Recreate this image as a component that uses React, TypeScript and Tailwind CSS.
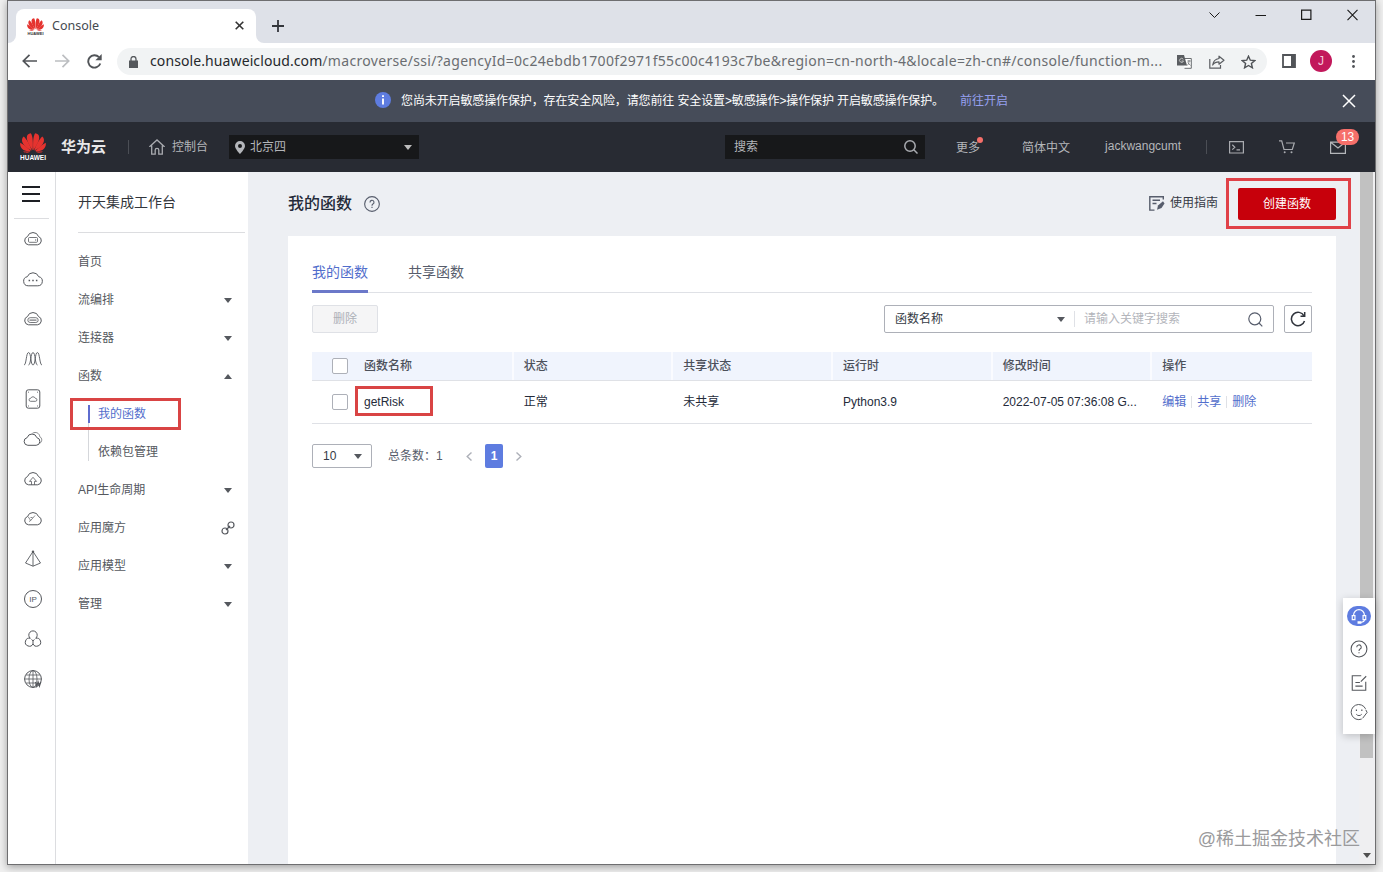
import { memo, ReactNode } from "react";

interface IconProps {
  children: ReactNode;
  size?: number;
  className?: string;
  strokeWidth?: number;
}

interface MenuItem {
  label: string;
  mark?: "down" | "up" | "link";
}

const URL_HOST = "console.huaweicloud.com";
const URL_PATH =
  "/macroverse/ssi/?agencyId=0c24ebdb1700f2971f55c00c4193c7be&region=cn-north-4&locale=zh-cn#/console/function-m...";

const COLUMNS = ["函数名称", "状态", "共享状态", "运行时", "修改时间", "操作"];
const ROW = ["getRisk", "正常", "未共享", "Python3.9", "2022-07-05 07:36:08 G..."];
const ACTIONS = ["编辑", "共享", "删除"];

const MENU_TOP: MenuItem[] = [
  { label: "首页" },
  { label: "流编排", mark: "down" },
  { label: "连接器", mark: "down" },
  { label: "函数", mark: "up" },
];

const MENU_BOTTOM: MenuItem[] = [
  { label: "API生命周期", mark: "down" },
  { label: "应用魔方", mark: "link" },
  { label: "应用模型", mark: "down" },
  { label: "管理", mark: "down" },
];

const CLOUD = "M5.500 15.800a4.300 4.300 0 0 1-1-8.300 5.800 5.800 0 0 1 11 0 4.300 4.300 0 0 1-1 8.300z";

// Base for the line icons, drawn on a 20x20 grid
function Icon({ children, size = 20, className = "", strokeWidth = 1 }: IconProps) {
  return (
    <svg
      width={size}
      height={size}
      viewBox="0 0 20 20"
      fill="none"
      stroke="currentColor"
      strokeWidth={strokeWidth}
      className={`shrink-0 ${className}`}
      aria-hidden="true"
    >
      {children}
    </svg>
  );
}

function Caret({ up = false, className = "" }: { up?: boolean; className?: string }) {
  return (
    <svg width="8" height="5" viewBox="0 0 8 5" fill="currentColor" className={`shrink-0 ${className}`}>
      <path d={up ? "M0 5L4 0L8 5z" : "M0 0H8L4 5z"} />
    </svg>
  );
}

function HuaweiFlower({ width, height }: { width: number; height: number }) {
  return (
    <svg width={width} height={height} viewBox="0 0 26 20" fill="#e5332f" className="shrink-0">
      <path d="M12.700 17.300C13.200 10.500 13 3 10.800.2 8.400.4 6.800 2 6.800 4.500c0 4 3.100 8.700 5.900 12.800z" />
      <path d="M13.300 17.300C12.800 10.500 13 3 15.200.2c2.400.2 4 1.800 4 4.300 0 4-3.100 8.700-5.900 12.800z" />
      <path d="M11.800 17.600C10 12 6.500 6 3.700 3.600 1.900 5.100 1.400 7.600 2.800 10.200c1.600 3 5.400 5.600 9 7.400z" />
      <path d="M14.200 17.600C16 12 19.500 6 22.300 3.600c1.800 1.500 2.300 4 .9 6.600-1.600 3-5.400 5.600-9 7.400z" />
      <path d="M11 18.100C7 14.500 3.500 11.300.3 9.800-.3 12.400.7 15.200 3.500 16.900c2.200 1.200 5 1.300 7.500 1.200z" />
      <path d="M15 18.100c4-3.600 7.500-6.800 10.700-8.300.6 2.600-.4 5.400-3.200 7.100-2.200 1.200-5 1.300-7.500 1.200z" />
      <path d="M10.500 18.500H3c1 .8 2.700 1.300 4.300 1.200 1.500-.1 2.500-.5 3.200-1.200zM15.500 18.500H23c-1 .8-2.700 1.300-4.300 1.200-1.500-.1-2.500-.5-3.200-1.200z" />
    </svg>
  );
}

const RAIL_ICONS: ReactNode[] = [
  <>
    <path d={CLOUD} />
    <rect x="5.500" y="8.500" width="9" height="4.800" rx="1" strokeWidth=".8" />
    <path d="M12 11h1.200" />
  </>,
  <>
    <path d="M5.200 16.800a4.600 4.600 0 0 1-.9-9.100 6.100 6.100 0 0 1 11.400 0 4.600 4.600 0 0 1-.9 9.100z" />
    <path d="M5.600 11.500h1.500M9.250 11.500h1.500M12.900 11.500h1.500" strokeWidth="1.400" />
  </>,
  <>
    <path d={CLOUD} />
    <rect x="4.800" y="8.700" width="10.400" height="4.800" rx="2.400" strokeWidth=".8" />
    <path d="M6.500 11.100h7" />
  </>,
  <path
    d="M1 16c2.500 0 2-12.500 4.600-12.500S7.500 16 10 16s1.900-12.500 4.400-12.500S16.500 16 19 16M5.500 16C8 16 7.500 3.500 10 3.500S12 16 14.500 16"
    strokeWidth=".9"
  />,
  <>
    <rect x="3.200" y=".8" width="13.600" height="18.400" rx="2.200" />
    <path d="M7.500 12.300a1.500 1.500 0 0 1 .2-3 2.500 2.500 0 0 1 4.600 0 1.500 1.500 0 0 1 .2 3z" strokeWidth=".8" />
    <path d="M5 3.200h1M14 3.200h1M5 17h1M14 17h1" strokeWidth=".8" />
  </>,
  <>
    <path d="M4.800 16.300a3.900 3.900 0 0 1-.6-7.700 5 5 0 0 1 9.600 0 3.900 3.900 0 0 1-.6 7.700z" />
    <path d="M9.500 4.200c3.500-1.800 7 0 7.300 3.500 2.500 1.300 2.600 4.800.2 6.500" strokeWidth=".7" />
  </>,
  <>
    <path d={CLOUD} />
    <path d="M8.500 15.800v-3.400H6.500L10 8.300l3.500 4.100h-2v3.400" strokeWidth=".8" />
  </>,
  <>
    <path d={CLOUD} />
    <path d="M5 7.500l2.700 4L12 6.500M6 12.500l1.700-1M7.500 8.500h2" strokeWidth=".7" />
  </>,
  <>
    <path d="M10 2.500L2.500 14 10 17.200l7.500-3.200zM10 2.500v14.700" strokeWidth=".9" />
    <circle cx="10" cy="2.800" r="1.200" fill="currentColor" stroke="none" />
  </>,
  <>
    <circle cx="10" cy="10" r="8.500" />
    <text x="10" y="12.900" textAnchor="middle" fontSize="8" fill="currentColor" stroke="none">
      IP
    </text>
  </>,
  <>
    <path d="M7.300 9.300a4.200 4.200 0 1 1 5.400 0M7.300 9.300a4 4 0 1 0 2.700 5.500 4 4 0 1 0 2.700-5.500M10 14.800v-3l-1.500-1.300M10 11.800l1.500-1.300" />
  </>,
  <>
    <circle cx="10" cy="10" r="8.400" />
    <ellipse cx="10" cy="10" rx="4" ry="8.400" strokeWidth=".8" />
    <path d="M10 1.600v16.800M1.600 10h16.800M3 6h14M3 14h9" strokeWidth=".8" />
    <path d="M12.500 13l1.300 4 1.300-4 1.300 4 1.300-4" strokeWidth="1.300" />
  </>,
];

const TitleBar = memo(function TitleBar() {
  return (
    <div className="flex h-[42px] shrink-0 items-start bg-[#dee1e8]">
      <div className="relative ml-2 mt-2 flex h-[34px] w-60 items-center rounded-t-lg bg-white pl-[11px]">
        <div className="flex flex-col items-center">
          <HuaweiFlower width={17} height={13} />
          <span className="h-[4px] text-[4px] leading-[5px] font-bold text-[#333]">HUAWEI</span>
        </div>
        <span className="ml-2 font-['Noto_Sans'] text-[12.500px] leading-4 text-[#454a50]">Console</span>
        <svg width="9" height="9" viewBox="0 0 9 9" stroke="#333" strokeWidth="1.600" className="ml-auto mr-[12px] -mt-px">
          <path d="M.7.7l7.600 7.600M8.300.7L.7 8.300" />
        </svg>
        <span className="absolute bottom-0 -left-2 size-2 overflow-hidden">
          <span className="absolute -left-2 -top-2 size-4 rounded-full shadow-[0_0_0_8px_white]" />
        </span>
        <span className="absolute bottom-0 -right-2 size-2 overflow-hidden">
          <span className="absolute left-0 -top-2 size-4 rounded-full shadow-[0_0_0_8px_white]" />
        </span>
      </div>
      <svg width="12" height="12" viewBox="0 0 12 12" stroke="#33363b" strokeWidth="1.800" className="ml-4 mt-[19px]">
        <path d="M6 0v12M0 6h12" />
      </svg>
      <div className="ml-auto mr-[17px] mt-[8px] flex items-center gap-[35px] text-[#1a1a1a]">
        <svg width="11" height="12" viewBox="0 0 11 12" fill="none" stroke="currentColor">
          <path d="M.5 3.500l5 5 5-5" />
        </svg>
        <svg width="11" height="12" viewBox="0 0 11 12" stroke="currentColor">
          <path d="M.5 6.500h10.500" />
        </svg>
        <svg width="11" height="12" viewBox="0 0 11 12" fill="none" stroke="currentColor" strokeWidth="1.200">
          <path d="M.6 1.100h9.300v9.300H.6z" />
        </svg>
        <svg width="11" height="12" viewBox="0 0 11 12" stroke="currentColor" strokeWidth="1.100">
          <path d="M.5.800l10 10.400M10.500.800l-10 10.400" />
        </svg>
      </div>
    </div>
  );
});

const AddressBar = memo(function AddressBar() {
  return (
    <div className="flex h-[37px] shrink-0 items-center bg-white text-[#5a5d61]">
      <svg width="15" height="14" viewBox="0 0 15 14" fill="none" stroke="#515458" strokeWidth="1.700" className="ml-[14px] -mt-px">
        <path d="M15 7H1.500M7.500.800L1.300 7l6.200 6.200" />
      </svg>
      <svg width="15" height="14" viewBox="0 0 15 14" fill="none" stroke="#bcbec1" strokeWidth="1.700" className="ml-[18px] -mt-px">
        <path d="M0 7h13.500M7.500.800L13.700 7l-6.200 6.200" />
      </svg>
      <svg width="15" height="15" viewBox="0 0 15 15" fill="none" stroke="#515458" strokeWidth="1.900" className="ml-[17px] -mt-px">
        <path d="M13.300 9.500A6.200 6.200 0 1 1 12 3.200" />
        <path d="M14.700 0v6.300H8.400z" fill="#515458" stroke="none" />
      </svg>
      <div className="ml-[15px] flex h-[27px] w-[1150px] items-center rounded-full bg-[#f1f3f4] pl-3">
        <svg width="9" height="12" viewBox="0 0 9 12" fill="#55585c" className="shrink-0">
          <path d="M0 4.500h9V12H0z" />
          <path d="M2 5V3a2.500 2.500 0 0 1 5 0v2" fill="none" stroke="#55585c" strokeWidth="1.300" />
        </svg>
        <div className="ml-3 w-[1016px] shrink-0 -mt-0.5 whitespace-nowrap font-['Noto_Sans'] text-[14px] leading-5 text-[#6a6d71]">
          <span className="tracking-[0.100px] text-[#25282c]">{URL_HOST}</span>
          <span className="tracking-[0.308px]">{URL_PATH}</span>
        </div>
        <svg width="15" height="14" viewBox="0 0 15 14" className="ml-[11px] shrink-0">
          <path d="M5 3.500h9.300v9.800H7.500" fill="#fff" stroke="#6a6d71" />
          <path d="M0 0h7l3 10.500H0z" fill="#5a5d61" />
          <path d="M6.300 4.300A2 2 0 1 0 6.500 6H4.600" fill="none" stroke="#ccc" strokeWidth=".9" />
          <path d="M10.300 6h3.500M12 5v1c0 2-.8 3.500-1.800 4.500M10.800 7.500l2.700 3" fill="none" stroke="#6a6d71" strokeWidth=".8" />
        </svg>
        <svg width="16" height="14" viewBox="0 0 16 14" fill="none" stroke="#5a5d61" strokeWidth="1.200" className="ml-[17px] shrink-0">
          <path d="M.8 4v9.200h10.700V10" />
          <path d="M10 1.200L15 5.200l-5 4V6.900C7 6.900 5 8 3.700 10c.5-3.700 2.700-6 6.300-6.500z" strokeLinejoin="round" />
        </svg>
        <svg width="15" height="14" viewBox="0 0 15 14" fill="none" stroke="#4f5256" strokeWidth="1.400" className="ml-4 shrink-0">
          <path d="M7.500 1.200l1.800 4 4.400.4-3.300 2.900 1 4.300-3.900-2.300-3.900 2.300 1-4.300L1.300 5.600l4.400-.4z" />
        </svg>
      </div>
      <svg width="14" height="14" viewBox="0 0 14 14" className="ml-[15px] -mt-0.5">
        <path d="M1 1h12v12H1z" fill="#fff" stroke="#515458" strokeWidth="1.800" />
        <path d="M9 1h4v12H9z" fill="#515458" />
      </svg>
      <div className="ml-[14px] -mt-px flex size-[22px] items-center justify-center rounded-full bg-[#c2185b] text-xs text-[#f4c9da]">
        J
      </div>
      <svg width="3" height="13" viewBox="0 0 3 13" fill="#515458" className="ml-5">
        <circle cx="1.500" cy="1.500" r="1.400" />
        <circle cx="1.500" cy="6.500" r="1.400" />
        <circle cx="1.500" cy="11.500" r="1.400" />
      </svg>
    </div>
  );
});

const NoticeBar = memo(function NoticeBar() {
  return (
    <div className="flex h-[42px] shrink-0 items-center bg-[#464c59] pl-[367px] pr-[19px] text-xs text-white">
      <svg width="16" height="16" viewBox="0 0 16 16" className="-mt-0.5 shrink-0">
        <circle cx="8" cy="8" r="8" fill="#5e7ce0" />
        <path d="M8 3.200v1.900M8 6.600v6" stroke="#fff" strokeWidth="1.900" />
      </svg>
      <span className="ml-[10px] w-[559px] whitespace-nowrap tracking-[-0.120px]">
        您尚未开启敏感操作保护，存在安全风险，请您前往 安全设置&gt;敏感操作&gt;操作保护 开启敏感操作保护。
      </span>
      <a className="whitespace-nowrap text-[#96a0f0]">前往开启</a>
      <svg width="14" height="14" viewBox="0 0 14 14" stroke="#fff" strokeWidth="1.500" className="ml-auto">
        <path d="M1 1l12 12M13 1L1 13" />
      </svg>
    </div>
  );
});

const ConsoleHeader = memo(function ConsoleHeader() {
  return (
    <header className="flex h-[50px] shrink-0 items-center bg-[#282b33] text-xs text-[#b4b6ba]">
      <div className="ml-[11px] flex w-7 flex-col items-center">
        <HuaweiFlower width={26} height={20} />
        <span className="mt-px text-[6.500px] leading-[7px] font-bold text-white">HUAWEI</span>
      </div>
      <span className="ml-[14px] text-[15px] font-bold text-[#e8e8ea]">华为云</span>
      <span className="ml-[22px] h-[14px] w-px bg-[#4b4e55]" />
      <svg width="16" height="16" viewBox="0 0 16 16" fill="none" stroke="#a9abb0" strokeWidth="1.300" className="ml-5">
        <path d="M.8 8V7.500L8 1l7.200 6.500V8M2.700 6.500v8.600h3.500v-4a1.800 1.800 0 0 1 3.600 0v4h3.500V6.500" />
      </svg>
      <span className="ml-[7px]">控制台</span>
      <div className="ml-[21px] flex h-6 w-[190px] items-center bg-[#17181a] pl-1.5 pr-[7px]">
        <svg width="10" height="13" viewBox="0 0 10 13" fill="#b4b6ba" fillRule="evenodd">
          <path d="M5 0a5 5 0 0 1 5 5c0 3-5 8-5 8S0 8 0 5a5 5 0 0 1 5-5zm0 3a2 2 0 1 0 0 4 2 2 0 0 0 0-4z" />
        </svg>
        <span className="ml-[5px]">北京四</span>
        <Caret className="ml-auto text-[#bdbdbd]" />
      </div>
      <div className="ml-[306px] flex h-6 w-[200px] items-center justify-between bg-[#17181a] pl-[9px] pr-[7px]">
        <span>搜索</span>
        <svg width="14" height="14" viewBox="0 0 14 14" fill="none" stroke="#a9abb0" strokeWidth="1.500">
          <circle cx="6" cy="6" r="5.200" />
          <path d="M9.800 9.800L13.500 13.500" />
        </svg>
      </div>
      <span className="relative ml-[31px] pt-px">
        更多
        <span className="absolute -right-[3px] -top-[2px] size-1.5 rounded-full bg-[#f66f6a]" />
      </span>
      <span className="ml-[42px] pt-px">简体中文</span>
      <span className="ml-[35px] w-[78px] pb-0.5">jackwangcumt</span>
      <span className="ml-[23px] h-[14px] w-px bg-[#4b4e55]" />
      <svg width="15" height="13" viewBox="0 0 15 13" fill="none" stroke="#a9abb0" strokeWidth="1.200" className="ml-[22px]">
        <path d="M.6.600h13.800v11.400H.6zM3.300 3.800l2.500 2.400-2.500 2.400M7.500 8.900h3.500" />
      </svg>
      <svg width="16" height="14" viewBox="0 0 16 14" fill="none" stroke="#a9abb0" strokeWidth="1.200" className="ml-[35px]">
        <path d="M0 .8h2.700L5 9.500h8.300L15.300 3H7" />
        <circle cx="5.700" cy="12.300" r="1" fill="#a9abb0" stroke="none" />
        <circle cx="12.500" cy="12.300" r="1" fill="#a9abb0" stroke="none" />
      </svg>
      <div className="relative ml-[35px]">
        <svg width="16" height="13" viewBox="0 0 16 13" fill="none" stroke="#b4b6ba" strokeWidth="1.200">
          <path d="M.6 1.100h14.800v11.300H.6zM1 1.500l7 5.500L15 1.500" />
        </svg>
        <span className="absolute -top-3 left-[6px] flex h-4 w-[23px] items-center justify-center rounded-full bg-[#f66f6a] text-xs text-white">
          13
        </span>
      </div>
    </header>
  );
});

function IconRail() {
  return (
    <nav className="flex w-12 shrink-0 flex-col border-r border-[#dcdde0] bg-white">
      <div className="mx-1.5 flex h-[47px] shrink-0 items-start border-b border-[#dcdde0] pl-2">
        <svg width="18" height="16" viewBox="0 0 18 16" stroke="#1d1f24" strokeWidth="2" className="mt-[14px]">
          <path d="M0 1h18M0 8h18M0 15h18" />
        </svg>
      </div>
      <div className="flex flex-col text-[#54575c]">
        {RAIL_ICONS.map((icon, index) => (
          <span key={index} className="flex h-10 items-center pl-[15px]">
            <Icon>{icon}</Icon>
          </span>
        ))}
      </div>
    </nav>
  );
}

function MenuRow({ label, mark }: MenuItem) {
  return (
    <div className="flex h-[38px] items-center justify-between pr-4">
      <span>{label}</span>
      {mark === "link" && (
        <svg width="14" height="14" viewBox="0 0 14 14" fill="none" stroke="currentColor" strokeWidth="1.200" className="-mr-[3px]">
          <circle cx="10" cy="4" r="3" />
          <circle cx="4" cy="10" r="3" />
          <path d="M5 9l4-4" />
        </svg>
      )}
      {(mark === "down" || mark === "up") && <Caret up={mark === "up"} />}
    </div>
  );
}

function SideMenu() {
  return (
    <aside className="w-48 shrink-0 bg-white pl-[22px] text-xs text-[#55585e]">
      <div className="mr-[3px] flex h-[61px] items-center border-b border-[#dcdde0] text-sm text-[#33363c]">
        开天集成工作台
      </div>
      <div className="mt-[10px]">
        {MENU_TOP.map((item) => (
          <MenuRow key={item.label} {...item} />
        ))}
        <div className="relative ml-[10px] flex h-[38px] items-center">
          <span className="h-[18px] w-[2px] bg-[#5e6ccf]" />
          <span className="ml-2 text-[#526ecc]">我的函数</span>
          {/* red frame drawn over the active entry */}
          <span className="absolute -left-[18px] top-[3px] h-8 w-[111px] border-3 border-[#d94444]" />
        </div>
        <div className="ml-[10px] flex h-[38px]">
          <span className="-mt-[10px] h-[38px] w-px bg-[#d5d7db]" />
          <span className="ml-[9px] flex items-center">依赖包管理</span>
        </div>
        {MENU_BOTTOM.map((item) => (
          <MenuRow key={item.label} {...item} />
        ))}
      </div>
    </aside>
  );
}

function Checkbox() {
  return <span className="ml-5 size-4 rounded-xs border border-[#adb0b8] bg-white" />;
}

function FunctionTable() {
  return (
    <div className="mt-[19px] text-xs">
      <div className="grid h-[29px] grid-cols-[42px_repeat(6,minmax(0,1fr))] border-b border-[#dfe1e6] bg-[#f0f4fd] text-[#4c505a]">
        <div className="flex items-center">
          <Checkbox />
        </div>
        {COLUMNS.map((title, index) => (
          <div
            key={title}
            className={`flex items-center pl-[10px] pb-px font-medium ${
              index < COLUMNS.length - 1 ? "border-r-2 border-[#fafbff]" : ""
            }`}
          >
            {title}
          </div>
        ))}
      </div>
      <div className="grid h-[43px] grid-cols-[42px_repeat(6,minmax(0,1fr))] border-b border-[#dfe1e6] text-[#252b3a]">
        <div className="flex items-center">
          <Checkbox />
        </div>
        {ROW.map((value, index) => (
          <div key={value} className="relative flex items-center whitespace-nowrap pl-[10px]">
            {value}
            {index === 0 && (
              <span className="absolute left-px top-[5px] h-[30px] w-[78px] border-3 border-[#d94444]" />
            )}
          </div>
        ))}
        <div className="flex items-center pl-[10px] text-[#526ecc]">
          {ACTIONS.map((action, index) => (
            <span
              key={action}
              className={index > 0 ? "ml-[5px] border-l border-[#dfe1e6] pl-[5px] leading-3" : "leading-3"}
            >
              {action}
            </span>
          ))}
        </div>
      </div>
    </div>
  );
}

function Toolbar() {
  return (
    <div className="mt-3 flex h-7 items-center text-xs">
      <button
        type="button"
        className="flex h-7 w-[66px] items-center justify-center rounded-xs border border-[#dfe1e6] bg-[#f5f5f6] text-[#adb0b8]"
      >
        删除
      </button>
      <div className="ml-auto flex h-7 w-[390px] items-center rounded-xs border border-[#adb0b8] bg-white pl-[10px] pr-[10px]">
        <span className="text-[#353a45]">函数名称</span>
        <Caret className="ml-auto mr-[9px] text-[#55585e]" />
        <span className="h-4 w-px bg-[#dfe1e6]" />
        <span className="ml-[9px] w-[164px] text-[#b3b5bb]">请输入关键字搜索</span>
        <svg width="15" height="15" viewBox="0 0 15 15" fill="none" stroke="#575d6c" strokeWidth="1.200">
          <circle cx="6.800" cy="6.800" r="6" />
          <path d="M11 11l3.300 3.300" />
        </svg>
      </div>
      <button
        type="button"
        className="ml-[10px] flex size-7 items-center justify-center rounded-xs border border-[#adb0b8] bg-white"
      >
        <svg width="16" height="16" viewBox="0 0 16 16" fill="none" stroke="#30343c" strokeWidth="1.500">
          <path d="M14.500 10A6.700 6.700 0 1 1 14 4.800M14.700 1v4.300h-4.200" />
        </svg>
      </button>
    </div>
  );
}

function Pager() {
  return (
    <div className="mt-5 flex h-6 items-center text-xs text-[#575d6c]">
      <div className="flex h-6 w-[60px] items-center justify-between rounded-xs border border-[#adb0b8] pl-[10px] pr-[9px] text-[#353a45]">
        10
        <Caret className="text-[#55585e]" />
      </div>
      <span className="ml-4 w-[78px]">总条数：1</span>
      <svg width="6" height="9" viewBox="0 0 6 9" fill="none" stroke="#adb0b8" strokeWidth="1.400">
        <path d="M5.500.500L1.200 4.500l4.300 4" />
      </svg>
      <span className="ml-[13px] flex h-6 w-[18px] items-center justify-center rounded-xs bg-[#5e7ce0] font-bold text-white">
        1
      </span>
      <svg width="6" height="9" viewBox="0 0 6 9" fill="none" stroke="#adb0b8" strokeWidth="1.400" className="ml-[13px]">
        <path d="M.5.500L4.800 4.500l-4.300 4" />
      </svg>
    </div>
  );
}

function FloatingTools() {
  return (
    <div className="absolute right-0 top-[426px] flex h-[136px] w-8 flex-col items-center bg-white text-[#54575c] shadow-[0_2px_8px_rgba(0,0,0,0.2)]">
      <span className="mt-2 flex h-5 w-6 items-center justify-center rounded-full bg-[#5e7ce0] text-white">
        <Icon size={18} strokeWidth={1.300}>
          <path d="M4 9.500V9a6 6 0 0 1 12 0v.500M16 14c0 2-1.500 3-4 3.200" />
          <path d="M2.500 9.500h3V14h-3zM14.500 9.500h3V14h-3zM9 16.500h3v1.500H9z" />
        </Icon>
      </span>
      <Icon size={18} className="mt-[14px]" strokeWidth={1.200}>
        <circle cx="10" cy="10" r="8.800" />
        <path d="M7.500 8a2.500 2.500 0 1 1 3.700 2.100c-.9.500-1.200.900-1.200 2M10 13.500v1.300" />
      </Icon>
      <Icon size={18} className="mt-4" strokeWidth={1.200}>
        <path d="M12.500 2H2.500v16h15V8.500M18 2.500l-6 6M6 9.500h5M6 13.500h8" />
      </Icon>
      <Icon size={18} className="mt-[11px]" strokeWidth={1.100}>
        <path d="M13 17.800A8.400 8.400 0 1 1 17.300 6.500M17.500 7.500L19 10.500l-5 6.500M7 12.500c1.500 2 4.500 2 6 0" />
        <path d="M6.500 8h1.300M12.500 8h1.300" strokeWidth="1.600" />
      </Icon>
    </div>
  );
}

function MainContent() {
  return (
    <main className="flex min-w-0 flex-1 flex-col bg-[#edeff3] pl-10 pr-[23px]">
      <div className="flex h-16 shrink-0 items-center">
        <h1 className="text-base font-medium text-[#252b3a]">我的函数</h1>
        <Icon size={16} className="ml-3 text-[#575d6c]" strokeWidth={1.400}>
          <circle cx="10" cy="10" r="9.200" />
          <path d="M7.500 8a2.500 2.500 0 1 1 3.700 2.100c-.9.500-1.200.900-1.200 2M10 13.500v1.500" />
        </Icon>
        <svg width="16" height="15" viewBox="0 0 16 15" fill="none" stroke="#575d6c" strokeWidth="1.400" className="ml-auto -mt-0.5">
          <path d="M14.300 3.500V.8H.8v13.300h4.700M3.500 4.300h7.500M3.500 7.500h4" />
          <path d="M8 13.800l1-4.300L14 5.200l1.500 2.300L12.500 12z" fill="#575d6c" stroke="none" />
        </svg>
        <span className="-mt-0.5 ml-[5px] text-xs text-[#353a45]">使用指南</span>
        <div className="relative ml-5">
          <button type="button" className="flex h-8 w-[98px] items-center justify-center rounded-xs bg-[#c7000b] text-xs text-white">
            创建函数
          </button>
          <span className="absolute -left-3 -top-[10px] h-[51px] w-[125px] border-3 border-[#e04148]" />
        </div>
      </div>
      <section className="flex-1 bg-white px-6 pt-[21px]">
        <div className="flex h-9 items-stretch gap-10 border-b border-[#dfe1e6] text-sm">
          <span className="-mb-px flex items-center border-b-3 border-[#6b78c9] pb-1 text-[#526ecc]">我的函数</span>
          <span className="flex items-center pb-1.5 text-[#575d6c]">共享函数</span>
        </div>
        <Toolbar />
        <FunctionTable />
        <Pager />
      </section>
    </main>
  );
}

function ScrollBar() {
  return (
    <div className="flex w-4 shrink-0 flex-col items-center justify-between bg-[#efeff1] pr-px">
      <span className="h-[586px] w-[13px] bg-[#c1c1c1]" />
      <Caret className="mb-1.5 text-[#505050]" />
    </div>
  );
}

function App() {
  return (
    <div className="flex h-[872px] w-[1383px] overflow-hidden bg-[#f0f0f0] pl-[7px] font-['Liberation_Sans','Noto_Sans_CJK_SC',sans-serif]">
      <div className="relative flex h-[865px] w-[1369px] flex-col border border-[#6e6e70] shadow-[0_2px_8px_rgba(0,0,0,0.35)]">
        <TitleBar />
        <AddressBar />
        <NoticeBar />
        <ConsoleHeader />
        <div className="relative flex min-h-0 flex-1">
          <IconRail />
          <SideMenu />
          <MainContent />
          <ScrollBar />
          <FloatingTools />
        </div>
        <span className="absolute bottom-[11px] right-[15px] whitespace-nowrap text-[18px] leading-7 text-[#9a9a9c]">
          @稀土掘金技术社区
        </span>
      </div>
    </div>
  );
}

export default memo(App);
